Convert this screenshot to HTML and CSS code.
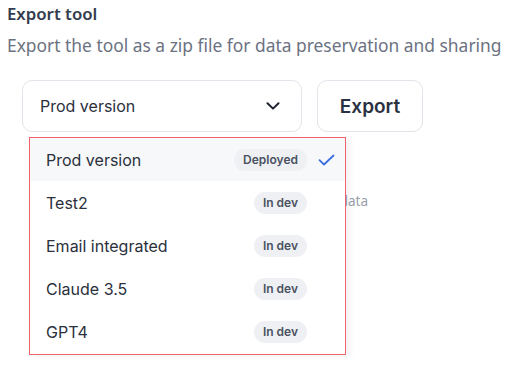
FILE: index.html
```html
<!DOCTYPE html>
<html>
<head>
<meta charset="utf-8">
<link rel="stylesheet" href="styles.css">
</head>
<body>
<div class="page">
  <h2 class="title">Export tool</h2>
  <p class="subtitle">Export the tool as a zip file for data preservation and sharing</p>
  <div class="controls">
    <div class="select">
      <span>Prod version</span>
      <svg class="chev" width="14" height="8" viewBox="0 0 14 8"><path d="M1.5 1.2 L7 6.6 L12.5 1.2" fill="none" stroke="#1f2430" stroke-width="2" stroke-linecap="round" stroke-linejoin="round"/></svg>
    </div>
    <button class="export">Export</button>
  </div>
  <div class="hidden-note"><span>Includes settings and data</span></div>

  <div class="menu">
    <div class="item active">
      <span class="name">Prod version</span>
      <span class="badge">Deployed</span>
      <span class="check"><svg width="17" height="12" viewBox="0 0 17 12"><path d="M1.5 6.2 L6 10.5 L15.5 1.5" fill="none" stroke="#3b6fe0" stroke-width="1.8" stroke-linecap="round" stroke-linejoin="round"/></svg></span>
    </div>
    <div class="item"><span class="name">Test2</span><span class="badge">In dev</span><span class="check"></span></div>
    <div class="item"><span class="name">Email integrated</span><span class="badge">In dev</span><span class="check"></span></div>
    <div class="item"><span class="name">Claude 3.5</span><span class="badge">In dev</span><span class="check"></span></div>
    <div class="item"><span class="name">GPT4</span><span class="badge">In dev</span><span class="check"></span></div>
  </div>
</div>
</body>
</html>
```

FILE: styles.css
```css
* { box-sizing: border-box; }
html, body { margin: 0; background: #ffffff; }
body { width: 531px; height: 374px; overflow: hidden; }
.page { position: relative; padding: 0 0 0 7px; font-family: "Noto Sans", "Open Sans", sans-serif; }
.title {
  margin: 0; padding-top: 3px;
  font-size: 16.8px; font-weight: 600; line-height: 22px;
  color: #333d4f;
}
.subtitle {
  margin: 8px 0 0 0;
  font-size: 17.4px; font-weight: 400; line-height: 24px;
  color: #6b7282;
}
.controls {
  display: flex; gap: 15px;
  margin: 23px 0 0 15px;
  font-family: Inter, "Noto Sans", sans-serif;
}
.select {
  width: 280px; height: 52px;
  border: 1px solid #e1e4ea; border-radius: 10px;
  display: flex; align-items: center; justify-content: space-between;
  padding: 0 21px 0 17px;
  font-size: 16px; color: #2a303c;
}
.chev { display: block; }
.export {
  width: 106px; height: 52px;
  border: 1px solid #e1e4ea; border-radius: 10px; background: #fff;
  font-family: Inter, "Noto Sans", sans-serif;
  font-size: 19px; font-weight: 600; color: #2a3142;
  padding: 0;
}
.hidden-note {
  width: 361px;
  margin: 60px 0 0 0;
  text-align: right;
  font-size: 13.5px; color: #9aa0ab;
  line-height: 18px; white-space: nowrap;
}
.menu {
  position: absolute; left: 29px; top: 137px;
  width: 317px; height: 218px;
  background: #fff;
  border: 1.5px solid #f0636a;
  box-shadow: 4px 2px 6px rgba(30, 40, 60, 0.06);
  font-family: Inter, "Noto Sans", sans-serif;
}
.item {
  height: 43px; display: flex; align-items: center;
  padding-left: 16px;
}
.item.active { background: #f7f8fa; }
.name { flex: 1; font-size: 16px; color: #2a303c; }
.badge {
  height: 22px; line-height: 22px; padding: 0 9px;
  border-radius: 11px; background: #eef0f4;
  font-size: 12px; font-weight: 600; color: #4a5160;
}
.check { width: 38px; display: flex; justify-content: center; }
.check svg { display: block; margin-left: 1px; }
```
